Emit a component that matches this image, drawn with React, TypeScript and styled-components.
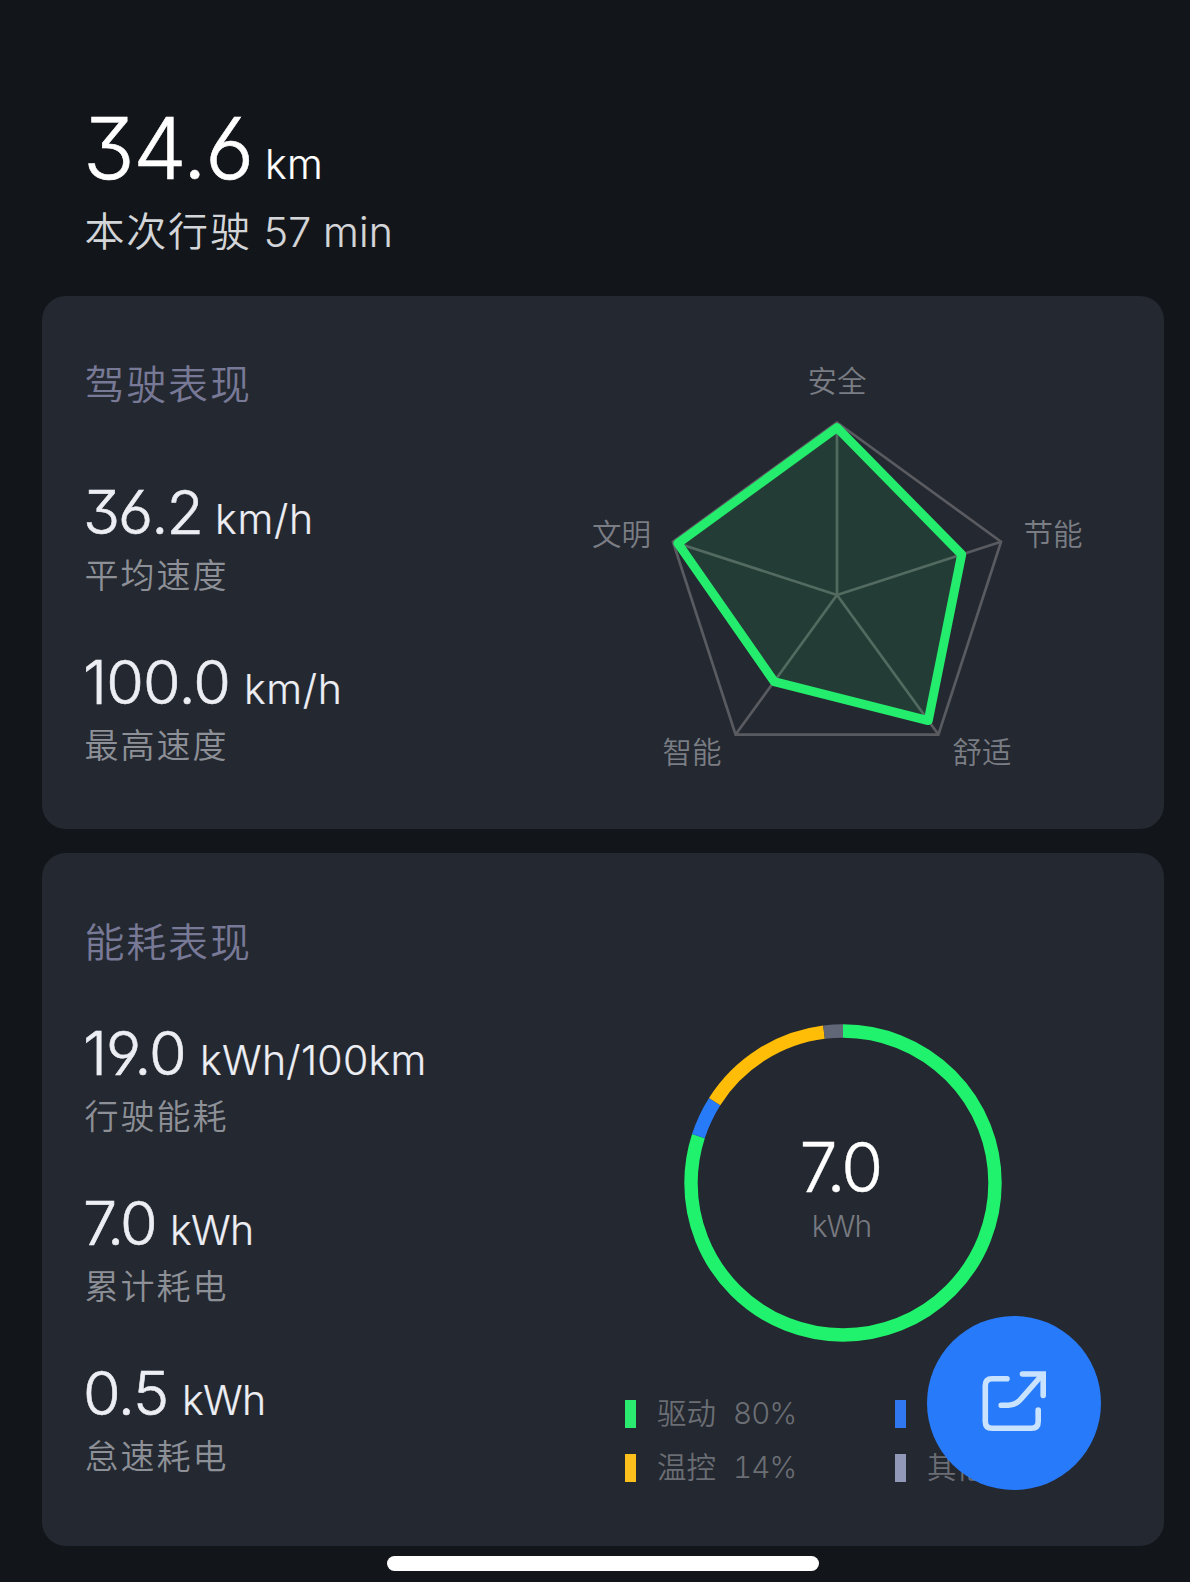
import React from "react";
import styled, { createGlobalStyle } from "styled-components";

const GlobalStyle = createGlobalStyle`
  *, *::before, *::after { box-sizing: border-box; }
  body {
    margin: 0;
    background: #12151a;
    font-family: Inter, "Noto Sans CJK SC", sans-serif;
    font-feature-settings: "cv03", "cv04", "cv09";
    font-weight: 350;
  }
`;

const Page = styled.main`
  position: relative;
  width: 1190px;
  height: 1582px;
  overflow: hidden;
  display: flex;
  flex-direction: column;
  gap: 24px;
  padding: 0 26px 0 42px;
  background: #12151a;
  white-space: nowrap;
`;

const Hero = styled.header`
  height: 271.6px;
  padding: 98.5px 0 0 42.5px;
`;

const ValueRow = styled.div<{ $height: number }>`
  display: flex;
  align-items: baseline;
  height: ${(p) => p.$height}px;
  line-height: ${(p) => p.$height}px;
`;

const Figure = styled.span<{ $size: number; $track: number; $slot: number }>`
  flex: none;
  width: ${(p) => p.$slot}px;
  margin-left: -1.5px;
  font-size: ${(p) => p.$size}px;
  letter-spacing: ${(p) => p.$track}px;
  -webkit-text-stroke: 0.6px currentColor;
`;

const Unit = styled.span<{ $track?: number }>`
  font-size: 41px;
  line-height: 1;
  letter-spacing: ${(p) => p.$track ?? -0.6}px;
  -webkit-text-stroke: 0.2px currentColor;
`;

const HeroFigure = styled(Figure)`
  color: #fff;
`;

const HeroUnit = styled(Unit)`
  color: #fff;
`;

const Duration = styled.p`
  margin: 5.5px 0 0;
  display: flex;
  gap: 12px;
  font-size: 40px;
  line-height: 56px;
  letter-spacing: 1.8px;
  color: #d3d5d8;
`;

const DurationTime = styled.span`
  font-size: 41px;
  letter-spacing: 0.2px;
  -webkit-text-stroke: 0.2px currentColor;
`;

const Card = styled.section<{ $height: number }>`
  flex: none;
  display: grid;
  grid-template-columns: 508px 1fr;
  height: ${(p) => p.$height}px;
  border-radius: 24px;
  background: #242830;
`;

const Stats = styled.div`
  padding: 61.6px 0 0 42.5px;
`;

const CardTitle = styled.h2<{ $gap: number }>`
  margin: 0 0 ${(p) => p.$gap}px;
  font-size: 40px;
  font-weight: 350;
  line-height: 56px;
  letter-spacing: 1.8px;
  color: #777996;
`;

const Metric = styled.div`
  height: 170px;
  color: #eceef4;
`;

const MetricLabel = styled.div`
  margin-top: 9px;
  font-size: 34px;
  line-height: 48px;
  letter-spacing: 2px;
  color: #8d9097;
`;

const RadarChart = styled.svg`
  display: block;
  width: 560px;
  height: 480px;
  margin-top: 43.6px;
`;

const RadarLabel = styled.text`
  font-size: 29.5px;
  fill: #7a7d84;
`;

const Breakdown = styled.div`
  display: flex;
  flex-direction: column;
  padding-top: 170.8px;
`;

const Donut = styled.div`
  display: grid;
  place-items: center;
  width: 318px;
  height: 318px;
  margin-left: 134px;

  > * {
    grid-area: 1 / 1;
  }
`;

const DonutReadout = styled.div`
  display: flex;
  flex-direction: column;
  align-items: center;
  margin: 9px 3px 0 0;
`;

const DonutValue = styled.div`
  height: 76.5px;
  margin-right: 3px;
  font-size: 68px;
  line-height: 76px;
  letter-spacing: -2.7px;
  color: #fff;
  -webkit-text-stroke: 0.4px currentColor;
`;

const DonutUnit = styled.div`
  font-size: 30px;
  line-height: 40px;
  letter-spacing: -1px;
  color: #777a80;
`;

const Legend = styled.div`
  display: grid;
  grid-template-columns: 270px 1fr;
  row-gap: 14px;
  margin: 52px 0 0 75px;
`;

const LegendItem = styled.div`
  display: flex;
  align-items: center;
  height: 40px;
  font-size: 29.5px;
  line-height: 39px;
  color: #6b6e74;
`;

const LegendText = styled.span`
  height: 40px;
`;

const Swatch = styled.span<{ $color: string }>`
  width: 10.5px;
  height: 28px;
  margin-right: 21.5px;
  background: ${(p) => p.$color};
`;

const Percent = styled.span`
  margin-left: 17px;
  font-feature-settings: "cv03", "cv04", "cv09", "tnum";
  letter-spacing: -0.8px;
`;

const ShareButton = styled.button`
  position: absolute;
  left: 927px;
  top: 1316px;
  display: grid;
  place-items: center;
  width: 174px;
  height: 174px;
  padding: 0;
  border: 0;
  border-radius: 50%;
  background: #277bfa;
`;

const HomeIndicator = styled.div`
  position: absolute;
  left: 387px;
  top: 1556px;
  width: 432px;
  height: 15px;
  border-radius: 8px;
  background: #fff;
`;

type MetricData = { value: string; unit: string; label: string; slot: number; track: number; unitTrack?: number };

const drivingMetrics: MetricData[] = [
  { value: "36.2", unit: "km/h", label: "平均速度", slot: 132, track: -2, unitTrack: 0.8 },
  { value: "100.0", unit: "km/h", label: "最高速度", slot: 161, track: -0.8, unitTrack: 0.7 },
];

const energyMetrics: MetricData[] = [
  { value: "19.0", unit: "kWh/100km", label: "行驶能耗", slot: 117, track: -0.9, unitTrack: 0.3 },
  { value: "7.0", unit: "kWh", label: "累计耗电", slot: 87, track: -2.6 },
  { value: "0.5", unit: "kWh", label: "怠速耗电", slot: 99, track: -1.3 },
];

const CENTER = { x: 287, y: 256 };
const RADIUS = 172.5;
const scores = [0.97, 0.76, 0.9, 0.62, 0.97];

const vertex = (index: number, scale = 1) => {
  const angle = (index * 72 * Math.PI) / 180;
  return [CENTER.x + Math.sin(angle) * RADIUS * scale, CENTER.y - Math.cos(angle) * RADIUS * scale];
};

const polygon = (values: number[]) => values.map((v, i) => vertex(i, v).join(",")).join(" ");

const radarLabels = [
  { text: "安全", x: 257.5, y: 52.5 },
  { text: "节能", x: 473.5, y: 205.5 },
  { text: "舒适", x: 402.5, y: 424 },
  { text: "智能", x: 112.5, y: 424 },
  { text: "文明", x: 42, y: 205.5 },
];

const shares = [
  { value: 80, color: "#21f26d" },
  { value: 4, color: "#277bf8" },
  { value: 14, color: "#ffbd08" },
  { value: 2, color: "#626778" },
];

const legend = [
  { name: "驱动", percent: "80%", color: "#2aeb70" },
  { name: "", percent: "", color: "#2f78f0" },
  { name: "温控", percent: "14%", color: "#fcbf1b" },
  { name: "其他", percent: "2%", color: "#9299b8" },
];

function Metrics({ items }: { items: MetricData[] }) {
  return (
    <>
      {items.map((m) => (
        <Metric key={m.label}>
          <ValueRow $height={62}>
            <Figure $size={61} $track={m.track} $slot={m.slot}>{m.value}</Figure>
            <Unit $track={m.unitTrack}>{m.unit}</Unit>
          </ValueRow>
          <MetricLabel>{m.label}</MetricLabel>
        </Metric>
      ))}
    </>
  );
}

function Radar() {
  return (
    <RadarChart viewBox="0 0 560 480">
      <g fill="none" stroke="#5a5b60" strokeWidth="2.7">
        <polygon points={polygon([1, 1, 1, 1, 1])} />
        {scores.map((_, i) => {
          const [x, y] = vertex(i);
          return <line key={i} x1={CENTER.x} y1={CENTER.y} x2={x} y2={y} />;
        })}
      </g>
      <polygon
        points={polygon(scores)}
        fill="#21f26d"
        fillOpacity="0.1"
        stroke="#24ec6d"
        strokeWidth="9"
        strokeLinejoin="round"
      />
      {radarLabels.map((l) => (
        <RadarLabel key={l.text} x={l.x} y={l.y}>{l.text}</RadarLabel>
      ))}
    </RadarChart>
  );
}

function Ring() {
  let start = 0;
  return (
    <svg width="318" height="318" viewBox="0 0 318 318">
      <g transform="rotate(-90 159 159)" fill="none" strokeWidth="13.4">
        {shares.map((s) => {
          const offset = -start;
          start += s.value;
          return (
            <circle
              key={s.color}
              cx="159"
              cy="159"
              r="152"
              pathLength="100"
              stroke={s.color}
              strokeDasharray={`${s.value} ${100 - s.value}`}
              strokeDashoffset={offset}
            />
          );
        })}
      </g>
    </svg>
  );
}

export default function App() {
  return (
    <>
      <GlobalStyle />
      <Page>
        <Hero>
          <ValueRow $height={100}>
            <HeroFigure $size={85} $track={-1.3} $slot={182}>34.6</HeroFigure>
            <HeroUnit $track={0.4}>km</HeroUnit>
          </ValueRow>
          <Duration>
            <span>本次行驶</span>
            <DurationTime>57 min</DurationTime>
          </Duration>
        </Hero>

        <Card $height={533.8}>
          <Stats>
            <CardTitle $gap={68.2}>驾驶表现</CardTitle>
            <Metrics items={drivingMetrics} />
          </Stats>
          <Radar />
        </Card>

        <Card $height={692.6}>
          <Stats>
            <CardTitle $gap={51.4}>能耗表现</CardTitle>
            <Metrics items={energyMetrics} />
          </Stats>
          <Breakdown>
            <Donut>
              <Ring />
              <DonutReadout>
                <DonutValue>7.0</DonutValue>
                <DonutUnit>kWh</DonutUnit>
              </DonutReadout>
            </Donut>
            <Legend>
              {legend.map((l) => (
                <LegendItem key={l.color}>
                  <Swatch $color={l.color} />
                  <LegendText>
                    {l.name}
                    <Percent>{l.percent}</Percent>
                  </LegendText>
                </LegendItem>
              ))}
            </Legend>
          </Breakdown>
        </Card>

        <ShareButton aria-label="分享">
          <svg width="174" height="174" viewBox="927 1316 174 174" fill="none" stroke="#c9e3ff" strokeWidth="5.6" strokeLinecap="round">
            <path d="M1007 1378.7H992Q985.3 1378.7 985.3 1385.4V1421.5Q985.3 1428.2 992 1428.2H1031.5Q1038.2 1428.2 1038.2 1421.5V1410" />
            <path d="M1001.2 1405.2H1008.5Q1015.5 1405.2 1020.5 1399.5L1042 1375" />
            <path d="M1022.5 1374H1043.2V1395.5" />
          </svg>
        </ShareButton>
        <HomeIndicator />
      </Page>
    </>
  );
}
